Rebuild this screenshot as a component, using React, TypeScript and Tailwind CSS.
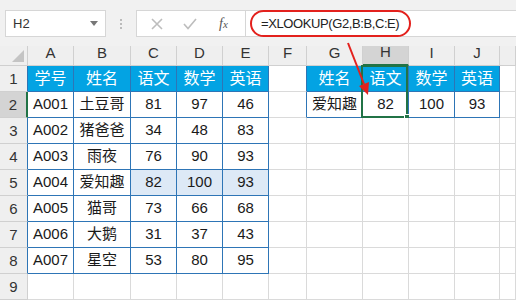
const header = ["A", "B", "C", "D", "E", "F", "G", "H", "I", "J", ""];

const rows: string[][] = [
  ["学号", "姓名", "语文", "数学", "英语", "", "姓名", "语文", "数学", "英语", ""],
  ["A001", "土豆哥", "81", "97", "46", "", "爱知趣", "82", "100", "93", ""],
  ["A002", "猪爸爸", "34", "48", "83", "", "", "", "", "", ""],
  ["A003", "雨夜", "76", "90", "93", "", "", "", "", "", ""],
  ["A004", "爱知趣", "82", "100", "93", "", "", "", "", "", ""],
  ["A005", "猫哥", "73", "66", "68", "", "", "", "", "", ""],
  ["A006", "大鹅", "31", "37", "43", "", "", "", "", "", ""],
  ["A007", "星空", "53", "80", "95", "", "", "", "", "", ""],
  ["", "", "", "", "", "", "", "", "", "", ""],
];

// r: sheet row (1-based), c: 0 = column A
const inMain = (r: number, c: number) => r >= 1 && r <= 8 && c <= 4;
const inLookup = (r: number, c: number) => r >= 1 && r <= 2 && c >= 6 && c <= 9;

const Cell = ({ r, c, text }: { r: number; c: number; text: string }) => {
  const table = inMain(r, c) || inLookup(r, c);
  const isHead = r === 1 && table;
  const rightBlue = table || (c === 5 && r <= 2);
  const highlight = r === 5 && c >= 2 && c <= 4;

  return (
    <div
      className={[
        "relative flex items-center justify-center border-r border-b text-[15px] text-[#1a1a1a]",
        rightBlue ? "border-r-[#2e75b6]" : "border-r-[#dadada]",
        table ? "border-b-[#2e75b6]" : "border-b-[#dadada]",
        isHead ? "bg-[#03a3e3] text-[16px] text-white" : highlight ? "bg-[#dde9f6]" : "bg-white",
        inLookup(r, c) && c === 9 ? "shadow-[3px_2px_4px_rgba(0,0,0,0.12)]" : "",
      ].join(" ")}
    >
      {text}
      {r === 2 && c === 7 && (
        <div className="pointer-events-none absolute left-[-2px] top-[-27px] h-[53px] w-[47px] border-2 border-[#217346]">
          <div className="absolute right-[-4px] bottom-[-4px] h-[6px] w-[6px] border border-white bg-[#217346]" />
        </div>
      )}
    </div>
  );
};

export default function App() {
  return (
    <div
      className="relative h-[300px] w-[516px] overflow-hidden bg-white"
      style={{ fontFamily: '"Liberation Sans", "Noto Sans CJK SC", sans-serif' }}
    >
      {/* formula bar */}
      <div className="flex h-[46px] items-start bg-[#f1f1f1] pt-[10px]">
        <div className="ml-[5px] flex h-[27px] w-[101px] items-center justify-between border border-[#d6d6d6] bg-white px-[7px] text-[13px] text-[#333]">
          <span>H2</span>
          <span className="h-0 w-0 border-x-[4px] border-t-[5px] border-x-transparent border-t-[#777]" />
        </div>
        <div className="ml-[14px] flex h-[27px] flex-col items-center justify-center gap-[2px]">
          <span className="h-[2px] w-[2px] rounded-full bg-[#a8a8a8]" />
          <span className="h-[2px] w-[2px] rounded-full bg-[#a8a8a8]" />
          <span className="h-[2px] w-[2px] rounded-full bg-[#a8a8a8]" />
        </div>
        <div className="ml-[14px] flex h-[27px] w-[110px] items-center border border-[#d6d6d6] bg-white">
          <svg width="12" height="12" viewBox="0 0 12 12" className="ml-[14px]">
            <path d="M1 1 L11 11 M11 1 L1 11" stroke="#bdbdbd" strokeWidth="1.6" />
          </svg>
          <svg width="14" height="12" viewBox="0 0 14 12" className="ml-[20px]">
            <path d="M1 6 L5 10.5 L13 1" stroke="#bdbdbd" strokeWidth="1.6" fill="none" />
          </svg>
          <span
            className="ml-[22px] text-[14px] italic text-[#555]"
            style={{ fontFamily: '"Liberation Serif", serif' }}
          >
            f<span className="text-[11px]">x</span>
          </span>
        </div>
        <div className="flex h-[27px] flex-1 items-center border-y border-[#d6d6d6] bg-white pl-[4px]">
          <span className="flex h-[27px] items-center rounded-full border-2 border-[#e3211d] pl-[9px] pr-[10px] text-[13px] tracking-[-0.4px] text-[#222]">
            =XLOOKUP(G2,B:B,C:E)
          </span>
        </div>
      </div>

      {/* sheet */}
      <div className="grid grid-cols-[28px_46px_57px_46px_46px_46px_38px_56px_46px_46px_45px_1fr] grid-rows-[20px_repeat(9,26px)]">
        <div className="flex items-end justify-end border-r border-b border-[#cfcfcf] bg-[#efefef] p-[3px]">
          <svg width="12" height="12" viewBox="0 0 12 12">
            <polygon points="12,0 12,12 0,12" fill="#c4c4c4" />
          </svg>
        </div>
        {header.map((h, i) => (
          <div
            key={i}
            className={[
              "flex items-end justify-center border-r border-b pb-[1px] text-[15px] text-[#333]",
              i === 7
                ? "border-b-2 border-b-[#217346] border-r-[#cfcfcf] bg-[#d4d4d4]"
                : "border-[#d0d0d0] bg-[#efefef]",
            ].join(" ")}
          >
            {h}
          </div>
        ))}
        {rows.map((row, ri) => {
          const r = ri + 1;
          return [
            <div
              key={`h${r}`}
              className={[
                "flex items-end justify-center border-r border-b pb-[1px] text-[15px] text-[#333]",
                r === 2
                  ? "border-r-2 border-r-[#217346] border-b-[#cfcfcf] bg-[#d4d4d4]"
                  : r <= 8
                    ? "border-r-[#2e75b6] border-b-[#d0d0d0] bg-[#efefef]"
                    : "border-[#d0d0d0] bg-[#efefef]",
              ].join(" ")}
            >
              {r}
            </div>,
            ...row.map((t, c) => <Cell key={`${r}-${c}`} r={r} c={c} text={t} />),
          ];
        })}
      </div>

      {/* arrow */}
      <svg className="pointer-events-none absolute left-0 top-0" width="516" height="300">
        <line x1="348" y1="43" x2="364" y2="84" stroke="#e3211d" strokeWidth="2" />
        <polygon points="368,95 369,82 359,86" fill="#e3211d" />
      </svg>
    </div>
  );
}
